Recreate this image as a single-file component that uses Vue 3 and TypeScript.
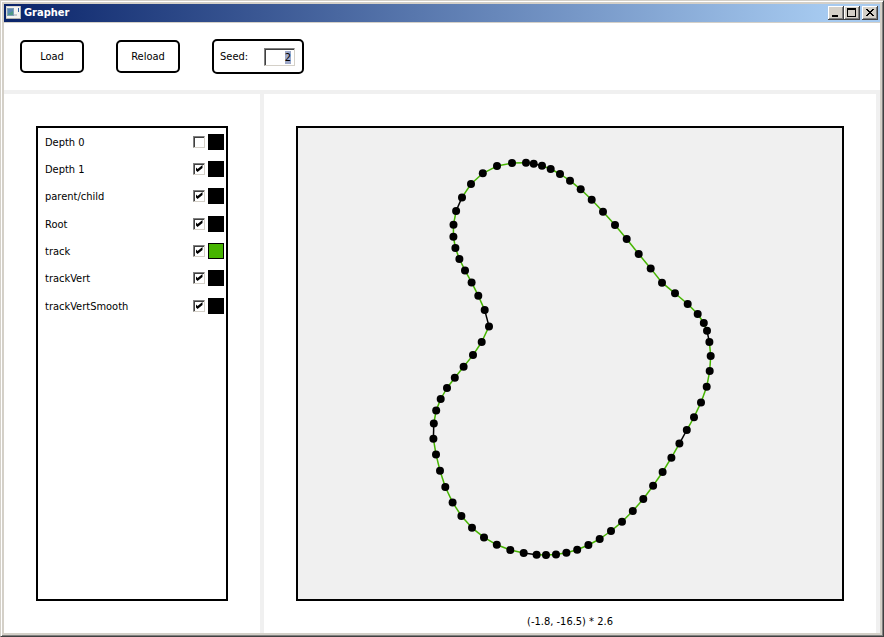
<script setup lang="ts">
import { onMounted, ref } from 'vue'

interface Layer {
  id: string
  name: string
  visible: boolean
  color: string
}

type Point = [number, number]

const layers = ref<Layer[]>([
  { id: 'depth0', name: 'Depth 0', visible: false, color: '#000000' },
  { id: 'depth1', name: 'Depth 1', visible: true, color: '#000000' },
  { id: 'parent-child', name: 'parent/child', visible: true, color: '#000000' },
  { id: 'root', name: 'Root', visible: true, color: '#000000' },
  { id: 'track', name: 'track', visible: true, color: '#46b400' },
  { id: 'track-vert', name: 'trackVert', visible: true, color: '#000000' },
  { id: 'track-vert-smooth', name: 'trackVertSmooth', visible: true, color: '#000000' },
])

// Closed loop of track vertices, clockwise from the top.
const points: Point[] = [
  [526, 162.8], [533.7, 163.7], [542, 165.7], [550.7, 169], [560, 174], [570, 180.7],
  [580.7, 189.3], [591.7, 199.7], [603, 211.7], [615, 225], [626.7, 239], [638.7, 254],
  [650.7, 268.4], [662, 282.7], [675, 293.3], [687.7, 304], [697.7, 314], [703.8, 323],
  [707, 330.8], [709.4, 342], [710.7, 356], [709.7, 371], [706.7, 386.8], [701, 402.4],
  [694, 417.3], [686.8, 430], [679.4, 443.6], [671.4, 457.7], [662.6, 472], [653.1, 485.7],
  [643.3, 499], [632.8, 511], [622, 521.8], [611, 531], [599.7, 539], [588.4, 545],
  [577.2, 549.7], [566.4, 552.7], [556, 554.4], [546, 555], [536.6, 554.7], [523.7, 553],
  [510.3, 550], [496.8, 544.8], [484, 537.4], [472, 527.8], [461.4, 516], [452.6, 502.4],
  [445.3, 487], [440, 470.8], [436, 454.4], [433.4, 438.8], [433.8, 423.5], [436.2, 410.4],
  [440.7, 399], [447, 388], [454.8, 377.7], [463.6, 366.8], [473, 355.1], [481.7, 342],
  [489, 326.4], [484.7, 310.1], [478.3, 295.7], [471.6, 282.4], [465, 270.4], [459.4, 259],
  [455.4, 248], [453.4, 236.7], [453.5, 224.7], [456.1, 211], [462, 197.4], [471, 184],
  [482.8, 173.3], [497, 166.1], [512, 163],
]

// Indices of the vertices whose outgoing edge joins two track pieces.
const joints = new Set([1, 18, 25, 40, 51, 60, 69])

const edges = points.map((from, i) => ({
  from,
  to: points[(i + 1) % points.length],
  joint: joints.has(i),
}))

const seed = ref('2')
const seedInput = ref<HTMLInputElement | null>(null)

onMounted(() => {
  seedInput.value?.focus()
  seedInput.value?.select()
})
</script>

<template>
  <div class="window">
    <header class="titlebar">
      <svg class="app-icon" viewBox="0 0 16 16" aria-hidden="true">
        <rect x="0" y="1" width="15" height="13" fill="#f4f4f2" />
        <path d="M0 1.5H15M0.5 1V14" stroke="#d8d8d4" />
        <path d="M0 13.5H15M14.5 1V14" stroke="#b4b4b0" />
        <rect x="1.5" y="3.5" width="6" height="7" fill="#4f9a84" stroke="#7f9fb8" />
        <path d="M2 4H7V6L2 9Z" fill="#5b87b4" />
        <rect x="12" y="3" width="1" height="4" fill="#2f5fa0" />
        <rect x="8" y="9" width="3" height="2" fill="#c8ccd0" />
      </svg>
      <h1 class="title">Grapher</h1>
      <div class="captions">
        <button type="button" class="caption" aria-label="Minimize">
          <svg viewBox="0 0 16 14"><path d="M4 9H10V11H4Z" /></svg>
        </button>
        <button type="button" class="caption" aria-label="Maximize">
          <svg viewBox="0 0 16 14"><path fill-rule="evenodd" d="M3 2H12V11H3ZM4 4V10H11V4Z" /></svg>
        </button>
        <button type="button" class="caption close" aria-label="Close">
          <svg viewBox="0 0 16 14">
            <path d="M4 3H6V4H7V5H9V4H10V3H12V4H11V5H10V6H9V7H10V8H11V9H12V10H10V9H9V8H7V9H6V10H4V9H5V8H6V7H7V6H6V5H5V4H4Z" />
          </svg>
        </button>
      </div>
    </header>

    <div class="toolbar">
      <button type="button" class="action">Load</button>
      <button type="button" class="action">Reload</button>
      <div class="seed">
        <label for="seed">Seed:</label>
        <input id="seed" ref="seedInput" v-model="seed" type="text" inputmode="numeric" />
      </div>
    </div>

    <main class="panes">
      <section class="pane side">
        <ul class="layers">
          <li v-for="layer in layers" :key="layer.id" class="layer">
            <label :for="layer.id">{{ layer.name }}</label>
            <input :id="layer.id" v-model="layer.visible" type="checkbox" />
            <button
              type="button"
              class="swatch"
              :style="{ backgroundColor: layer.color }"
              :aria-label="layer.name + ' color'"
            ></button>
          </li>
        </ul>
      </section>

      <section class="pane view">
        <div class="canvas">
          <svg viewBox="298 128 544 471" aria-label="Graph">
            <line
              v-for="(edge, i) in edges"
              :key="'e' + i"
              :class="['edge', { joint: edge.joint }]"
              :x1="edge.from[0]"
              :y1="edge.from[1]"
              :x2="edge.to[0]"
              :y2="edge.to[1]"
            />
            <circle v-for="(p, i) in points" :key="'p' + i" :cx="p[0]" :cy="p[1]" r="4" />
          </svg>
        </div>
        <p class="status">(-1.8, -16.5) * 2.6</p>
      </section>
    </main>
  </div>
</template>

<style>
body {
  margin: 0;
}
</style>

<style scoped>
.window {
  box-sizing: border-box;
  display: flex;
  flex-direction: column;
  height: 100vh;
  padding: 3px;
  border: 1px solid #d4d0c8;
  border-right-color: #404040;
  border-bottom-color: #404040;
  box-shadow: inset 1px 1px #ffffff, inset -1px -1px #808080;
  background: #d4d0c8;
  color: #000000;
  font: 11px/14px Tahoma, "DejaVu Sans Condensed", sans-serif;
}

button,
input {
  box-sizing: border-box;
  margin: 0;
  padding: 0;
  font: inherit;
  color: inherit;
}

.titlebar {
  display: flex;
  flex: none;
  align-items: center;
  height: 18px;
  margin-bottom: 1px;
  padding: 0 2px;
  background: linear-gradient(to right, #0a246a, #a6caf0 94%);
}

.app-icon {
  width: 16px;
  height: 16px;
}

.title {
  flex: 1;
  margin: 0;
  padding-left: 2px;
  color: #ffffff;
  font-size: 11px;
  font-weight: bold;
}

.captions {
  display: flex;
}

.caption {
  width: 16px;
  height: 14px;
  border: 0;
  background: #d4d0c8;
  box-shadow: inset -1px -1px #404040, inset 1px 1px #ffffff, inset -2px -2px #808080;
}

.caption svg {
  display: block;
  width: 16px;
  height: 14px;
}

.close {
  margin-left: 2px;
}

.toolbar {
  display: flex;
  flex: none;
  align-items: center;
  gap: 32px;
  padding: 16px;
  background: #ffffff;
}

.action {
  width: 64px;
  height: 33px;
  padding-top: 1px;
  border: 2px solid #000000;
  border-radius: 5px;
  background: #ffffff;
}

.seed {
  box-sizing: border-box;
  display: flex;
  align-items: center;
  justify-content: space-between;
  width: 92px;
  height: 35px;
  padding: 0 7px 0 6px;
  border: 2px solid #000000;
  border-radius: 5px;
}

.seed label {
  padding-top: 1px;
}

.seed input {
  width: 31px;
  height: 18px;
  padding: 1px 3px 0 2px;
  border: 1px solid #808080;
  border-right-color: #d4d0c8;
  border-bottom-color: #d4d0c8;
  border-radius: 0;
  outline: none;
  background: #ffffff;
  box-shadow: inset 1px 1px #404040;
  text-align: right;
}

.seed input::selection {
  background: #9da8c9;
  color: #000000;
}

.panes {
  display: flex;
  flex: 1;
  gap: 4px;
  min-height: 0;
  padding: 4px 4px 0 0;
  background: #f0f0f0;
}

.pane {
  box-sizing: border-box;
  display: flex;
  flex-direction: column;
  padding: 32px 32px 0;
  background: #ffffff;
}

.side {
  flex: none;
  width: 256px;
  padding-bottom: 32px;
}

.view {
  flex: 1;
  min-width: 0;
}

.layers {
  flex: 1;
  margin: 0;
  padding: 6px 2px 0 7px;
  border: 2px solid #000000;
  list-style: none;
}

.layer {
  display: flex;
  align-items: center;
  gap: 3px;
  height: 16px;
  margin-bottom: 11px;
}

.layer:nth-child(3n) {
  margin-bottom: 12px;
}

.layer label {
  flex: 1;
  padding-top: 1px;
}

.layer input {
  appearance: none;
  width: 12px;
  height: 12px;
  margin-bottom: 1px;
  border: 1px solid #808080;
  border-right-color: #d4d0c8;
  border-bottom-color: #d4d0c8;
  background: #ffffff;
  box-shadow: inset 1px 1px #404040;
}

.layer input:checked {
  display: grid;
  place-items: center;
}

.layer input:checked::before {
  content: "";
  width: 7px;
  height: 7px;
  background: #000000;
  clip-path: polygon(0 29%, 29% 57%, 100% 0, 100% 43%, 29% 100%, 0 71%);
}

.swatch {
  width: 16px;
  height: 16px;
  border: 1px solid #000000;
}

.canvas {
  flex: 1;
  min-height: 0;
  border: 2px solid #000000;
  background: #f0f0f0;
}

.canvas svg {
  display: block;
  width: 100%;
  height: 100%;
}

.edge {
  stroke: #46b400;
  stroke-width: 1.5;
}

.joint {
  stroke: #000000;
}

.status {
  flex: none;
  margin: 0;
  padding: 14px 0 4px;
  text-align: center;
}
</style>
